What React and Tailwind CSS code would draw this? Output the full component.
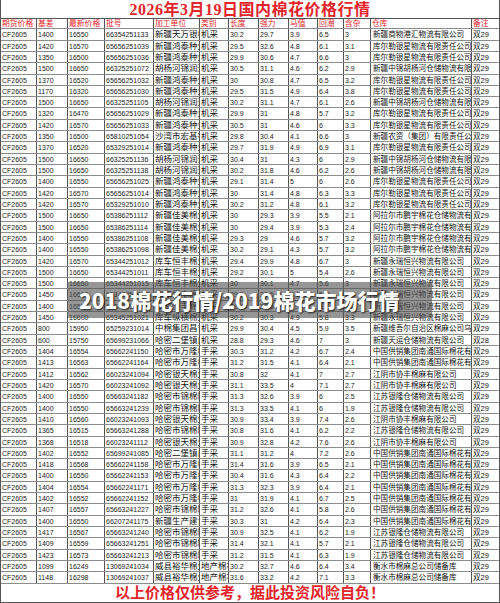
import React from "react";

const HEADERS = ["期货价格", "基差", "最新价格", "批号", "加工单位", "类别", "长度", "强力", "马值", "回潮", "含杂", "仓库", "备注"];

// 期货价格 is always CF2605, so rows start at 基差
const ROWS = [
  ["1400", "16550", "66354251133", "新疆天万银棉业", "机采", "30.2", "29.7", "3.9", "6.5", "3", "新疆商物港汇物流有限公司"],
  ["1420", "16570", "65656251039", "新疆鸿泰种业", "机采", "29.5", "32.6", "4.8", "6.1", "3.1", "库尔勒银星物流有限责任公司"],
  ["1350", "16500", "65656251036", "新疆鸿泰种业", "机采", "29.9", "30.6", "4.7", "6.6", "3", "库尔勒银星物流有限责任公司"],
  ["1500", "16650", "66325251072", "胡杨河锦润达", "机采", "30.5", "31.1", "4.6", "6.2", "2.9", "新疆中锦胡杨河仓储物流有限公司"],
  ["1370", "16520", "65656251032", "新疆鸿泰种业", "机采", "30", "30.8", "4.7", "6.5", "3.2", "库尔勒银星物流有限责任公司"],
  ["1170", "16320", "65656251030", "新疆鸿泰种业", "机采", "29.5", "31.5", "4.9", "6.4", "3.8", "库尔勒银星物流有限责任公司"],
  ["1500", "16650", "66325251105", "胡杨河锦润达", "机采", "30.2", "31.1", "4.7", "6.1", "2.6", "新疆中锦胡杨河仓储物流有限公司"],
  ["1320", "16470", "65656251029", "新疆鸿泰种业", "机采", "29.9", "31", "4.8", "5.7", "3.2", "库尔勒银星物流有限责任公司"],
  ["1420", "16570", "65656251033", "新疆鸿泰种业", "机采", "30.5", "31", "4.6", "6", "3.3", "库尔勒银星物流有限责任公司"],
  ["1350", "16500", "65810251054", "沙湾市宏基农业", "机采", "29.8", "30.4", "4.1", "6.6", "3", "新疆农资（集团）有限责任公司"],
  ["1370", "16520", "65329251014", "新疆鸿泰种业", "机采", "29.7", "31.9", "4.9", "6.9", "3.1", "库尔勒银星物流有限责任公司"],
  ["1500", "16650", "66325251136", "胡杨河锦润达", "机采", "30.4", "31", "4.3", "6", "2.9", "新疆中锦胡杨河仓储物流有限公司"],
  ["1500", "16650", "66325251138", "胡杨河锦润达", "机采", "30.2", "31.8", "4.6", "6.2", "2.6", "新疆中锦胡杨河仓储物流有限公司"],
  ["1400", "16550", "65656251025", "新疆鸿泰种业", "机采", "29.1", "31.4", "5", "6", "2.6", "库尔勒银星物流有限责任公司"],
  ["1420", "16570", "65656251014", "新疆鸿泰种业", "机采", "30", "31.4", "4.8", "6.3", "3.3", "库尔勒银星物流有限责任公司"],
  ["1420", "16570", "65329251010", "新疆鸿泰种业", "机采", "30.2", "31.2", "4.8", "6.1", "3.2", "库尔勒银星物流有限责任公司"],
  ["1500", "16650", "65386251112", "新疆佳美棉业", "机采", "30", "29.3", "3.9", "5.5", "2.1", "阿拉尔市鹏宇棉花仓储物流有限公司"],
  ["1500", "16650", "65386251114", "新疆佳美棉业", "机采", "30", "29.4", "3.9", "5.3", "2.4", "阿拉尔市鹏宇棉花仓储物流有限公司"],
  ["1400", "16550", "65386251108", "新疆佳美棉业", "机采", "29.3", "29", "4.6", "5.7", "3.2", "阿拉尔市鹏宇棉花仓储物流有限公司"],
  ["1400", "16550", "65386251098", "新疆佳美棉业", "机采", "30.2", "29.1", "4.3", "5.7", "3.2", "阿拉尔市鹏宇棉花仓储物流有限公司"],
  ["1420", "16570", "65344251012", "库车恒丰棉业", "机采", "29.4", "29.9", "4.8", "6.7", "3", "新疆永瑞恒兴物流有限公司"],
  ["1500", "16650", "65344251011", "库车恒丰棉业", "机采", "29.2", "30.1", "5", "5.4", "2.6", "新疆永瑞恒兴物流有限公司"],
  ["1500", "16650", "65344251015", "库车恒丰棉业", "机采", "30", "30.1", "4.7", "5.6", "3", "新疆永瑞恒兴物流有限公司"],
  ["1450", "16600", "65344251017", "库车恒丰棉业", "机采", "29.8", "30.5", "4.6", "5.9", "3.1", "新疆永瑞恒兴物流有限公司"],
  ["1400", "16550", "65344251019", "库车恒丰棉业", "机采", "29.4", "30.6", "4.9", "5.7", "3.2", "新疆永瑞恒兴物流有限公司"],
  ["1450", "16600", "65345251021", "库车纵横棉业", "机采", "30.2", "30.3", "4.9", "5.8", "3.3", "新疆永瑞恒兴物流有限公司"],
  ["800", "15950", "65259231014", "中棉集团昌吉", "机采", "29.9", "30.4", "4.5", "5.9", "3.5", "新疆维吾尔自治区棉麻公司乌鲁木齐"],
  ["600", "15750", "65699231066", "哈密二堡镇白", "机采", "28.8", "29.3", "4.6", "7", "3", "新疆天运仓储物流有限公司", "双28"],
  ["1404", "16554", "65662241150", "哈密市万隆棉", "手采", "30.3", "31.2", "4.2", "6.7", "2.4", "中国供销集团南通国际棉花有限公司"],
  ["1413", "16563", "65662241164", "哈密市万隆棉", "手采", "31.2", "31.5", "4.1", "6.4", "2.1", "中国供销集团南通国际棉花有限公司"],
  ["1412", "16562", "66023241094", "哈密银天棉业", "手采", "30.8", "32", "4.1", "7", "2.7", "江阴市协丰棉麻有限公司"],
  ["1420", "16570", "66023241092", "哈密银天棉业", "手采", "31.1", "33.5", "4", "7.1", "2.7", "江阴市协丰棉麻有限公司"],
  ["1400", "16550", "65663241182", "哈密市锦棉制", "手采", "31.3", "32.6", "3.9", "6", "2.5", "江苏银隆仓储物流有限公司"],
  ["1400", "16550", "65663241239", "哈密市锦棉制", "手采", "31.3", "33.5", "4.1", "6", "1.9", "江苏银隆仓储物流有限公司"],
  ["1410", "16560", "66023241093", "哈密银天棉业", "手采", "30.9", "33.4", "3.9", "7.4", "2.6", "江阴市协丰棉麻有限公司"],
  ["1365", "16515", "65663241288", "哈密市锦棉制", "手采", "30.8", "31.6", "4.1", "6.2", "2.2", "江苏银隆仓储物流有限公司"],
  ["1368", "16518", "66023241112", "哈密银天棉业", "手采", "30.9", "32.8", "4.2", "7.6", "2.6", "江阴市协丰棉麻有限公司"],
  ["1402", "16552", "65699241085", "哈密二堡镇白", "手采", "31.1", "31.2", "4", "7.2", "2.6", "中国供销集团南通国际棉花有限公司"],
  ["1418", "16568", "65662241158", "哈密市万隆棉", "手采", "31.4", "31.6", "3.9", "6.5", "2.1", "中国供销集团南通国际棉花有限公司"],
  ["1400", "16550", "65662241153", "哈密市万隆棉", "手采", "30.4", "31.6", "4.3", "6.4", "2.2", "中国供销集团南通国际棉花有限公司"],
  ["1404", "16554", "65662241171", "哈密市万隆棉", "手采", "31.3", "32.3", "3.9", "6.4", "2.1", "中国供销集团南通国际棉花有限公司"],
  ["1402", "16552", "65662241152", "哈密市万隆棉", "手采", "31", "31.9", "4.1", "6.7", "2.5", "中国供销集团南通国际棉花有限公司"],
  ["1407", "16557", "65663241227", "哈密市锦棉制", "手采", "31.2", "32.6", "4.1", "5.8", "2.6", "中国供销集团南通国际棉花有限公司"],
  ["1400", "16550", "66207241175", "新疆生产建设", "手采", "30.3", "31", "4.2", "6.4", "2.3", "中国供销集团南通国际棉花有限公司"],
  ["1417", "16567", "65663241240", "哈密市锦棉制", "手采", "30.9", "32.5", "4.1", "6.2", "1.9", "江苏银隆仓储物流有限公司"],
  ["1409", "16559", "65663241251", "哈密市锦棉制", "手采", "31.4", "32.1", "4.1", "5.7", "2.1", "江苏银隆仓储物流有限公司"],
  ["1423", "16573", "65663241213", "哈密市锦棉制", "手采", "31.2", "31.5", "4.1", "6.3", "1.9", "江苏银隆仓储物流有限公司"],
  ["1099", "16249", "13069241034", "威县裕华棉业", "地产棉花", "30.2", "32.7", "4.6", "6.4", "3.4", "衡水市棉麻总公司储备库"],
  ["1148", "16298", "13069241037", "威县裕华棉业", "地产棉花", "31.6", "33.2", "4.2", "7.1", "3.3", "衡水市棉麻总公司储备库"],
];

const GRID = "grid grid-cols-[36px_31px_37px_49px_46px_29px_30px_30px_29px_26px_27px_101px_29px]";
const CELL = "overflow-hidden whitespace-nowrap border-r border-[#555] pl-[1px]";

function Row({ r }) {
  const [basis, price, lot, mill, kind, len, str, mic, moist, trash, store, note] = r;
  const nums = "text-[7px] leading-[11px] text-[#222]";
  const cjk = "text-[8.5px] leading-[11px] text-[#111]";
  return (
    <div className={`${GRID} h-[11.32px] border-b border-[#8c8c8c]`}>
      <div className={`${CELL} ${nums}`}>CF2605</div>
      <div className={`${CELL} ${nums}`}>{basis}</div>
      <div className={`${CELL} ${nums}`}>{price}</div>
      <div className={`${CELL} ${nums}`}>{lot}</div>
      <div className={`${CELL} ${cjk}`}>{mill}</div>
      <div className={`${CELL} ${cjk}`}>{kind}</div>
      <div className={`${CELL} ${nums}`}>{len}</div>
      <div className={`${CELL} ${nums}`}>{str}</div>
      <div className={`${CELL} ${nums}`}>{mic}</div>
      <div className={`${CELL} ${nums}`}>{moist}</div>
      <div className={`${CELL} ${nums}`}>{trash}</div>
      <div className={`${CELL} text-[7.6px] leading-[11px] text-[#111] pl-[2px]`}>{store}</div>
      <div className="overflow-hidden whitespace-nowrap pl-[1px] text-[7.5px] leading-[11px] text-[#111]">{note || "双29"}</div>
    </div>
  );
}

export default function App() {
  return (
    <div className="relative w-[500px] h-[603px] overflow-hidden bg-white font-['Liberation_Sans','Noto_Sans_CJK_SC',sans-serif]">
      <div className="border-l border-r border-[#555]">
        <div className="h-[19.3px] border-b border-[#555] flex items-center justify-center">
          <span className="text-[16px] leading-[19px] font-bold text-[#e3242b] font-['Liberation_Serif','Noto_Sans_CJK_SC',serif] tracking-[0.5px]">
            2026年3月19日国内棉花价格行情
          </span>
        </div>
        <div className={`${GRID} h-[10px] border-b border-[#8c8c8c]`}>
          {HEADERS.map((h, i) => (
            <div
              key={h}
              className={`overflow-hidden whitespace-nowrap pl-[1px] text-[7.8px] leading-[9px] text-[#e3242b] ${i < HEADERS.length - 1 ? "border-r border-[#555]" : ""}`}
            >
              {h}
            </div>
          ))}
        </div>
        {ROWS.map((r, i) => (
          <Row key={i} r={r} />
        ))}
        <div className="h-[19px] border-b border-[#555] flex items-center justify-center">
          <span className="text-[15px] leading-[18px] font-bold text-[#e3242b] font-['Liberation_Serif','Noto_Sans_CJK_SC',serif]">
            以上价格仅供参考，据此投资风险自负！
          </span>
        </div>
      </div>

      {/* watermark band over the table */}
      <div className="absolute left-[68px] top-[282px] w-[364px] h-[36px] bg-[#505050]/60 flex items-center pl-[11px]">
        <span className="text-[21px] leading-[24px] font-black text-white font-['Noto_Sans_CJK_SC',sans-serif] [text-shadow:1px_1px_2px_rgba(0,0,0,0.8)]">
          2018棉花行情/2019棉花市场行情
        </span>
      </div>
    </div>
  );
}
